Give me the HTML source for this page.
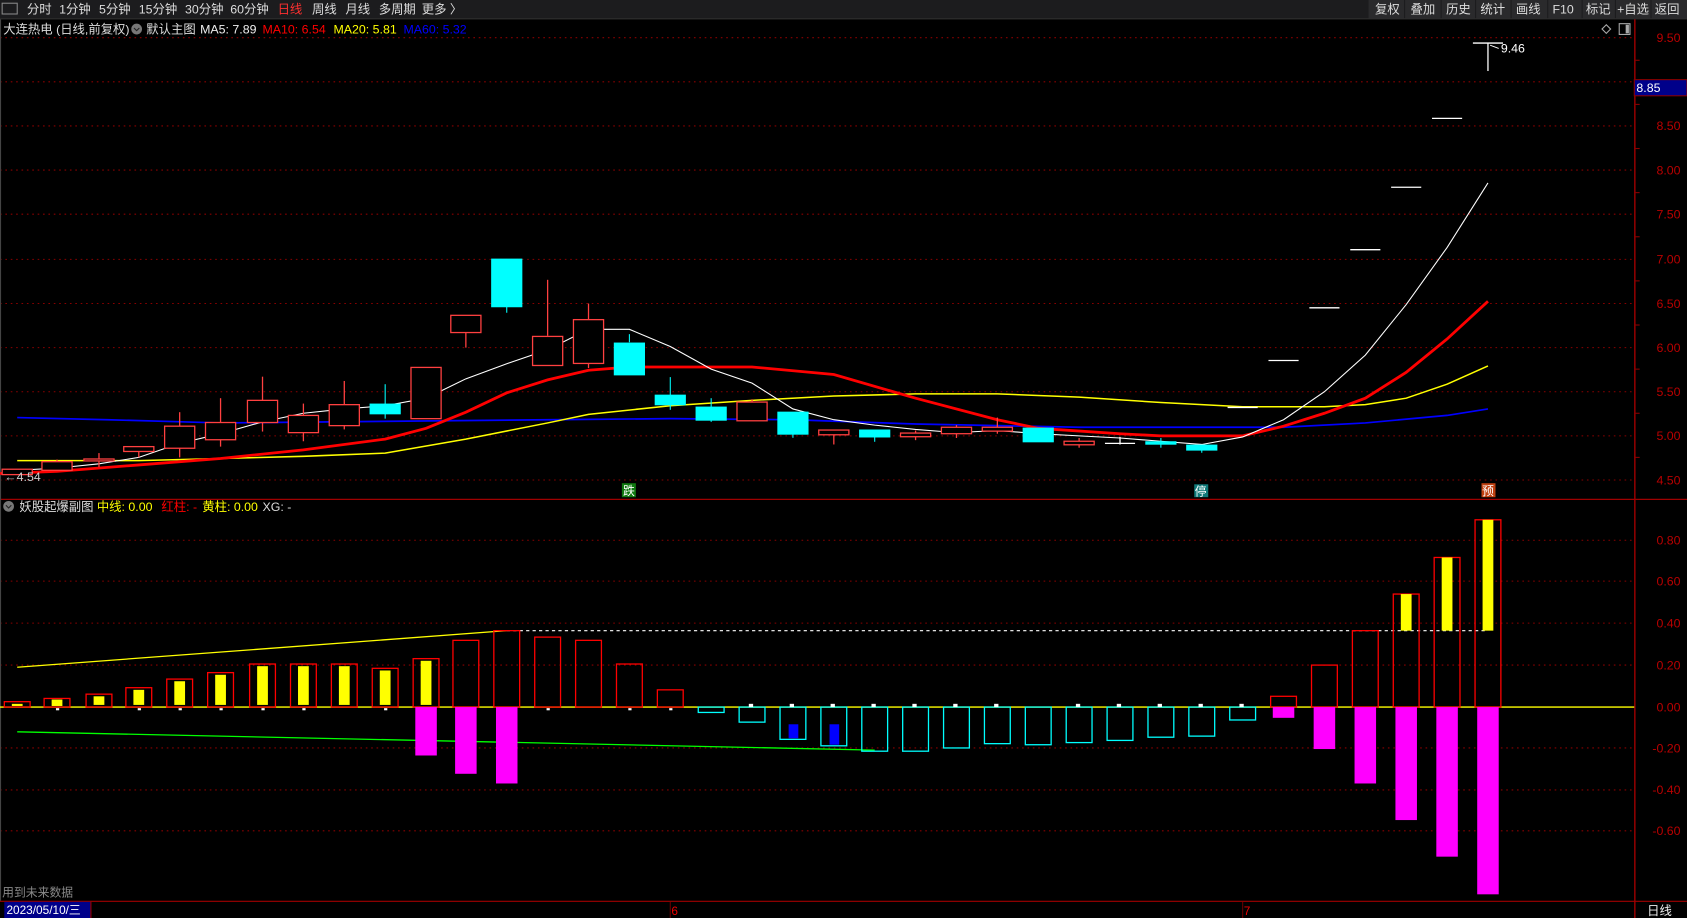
<!DOCTYPE html>
<html><head><meta charset="utf-8"><style>
html,body{margin:0;padding:0;background:#000;overflow:hidden}
svg{display:block}
text{font-family:"Liberation Sans","Noto Sans CJK SC",sans-serif}
</style></head><body>
<svg width="1687" height="918" viewBox="0 0 1568 853" preserveAspectRatio="none" xmlns="http://www.w3.org/2000/svg">
<rect width="1568" height="853" fill="#000"/>
<!-- toolbar -->
<rect x="0" y="0" width="1568" height="17" fill="#1c1c1e"/>
<line x1="0" y1="17.5" x2="1568" y2="17.5" stroke="#333"/>
<rect x="2" y="3" width="14" height="10" fill="none" stroke="#888" stroke-width="1"/>
<g font-size="11.5" fill="#ddd">
<text x="25" y="12.5">分时</text><text x="55" y="12.5">1分钟</text><text x="92" y="12.5">5分钟</text><text x="129" y="12.5">15分钟</text><text x="172" y="12.5">30分钟</text><text x="214" y="12.5">60分钟</text>
<text x="258" y="12.5" fill="#ff3030">日线</text><text x="290" y="12.5">周线</text><text x="321" y="12.5">月线</text><text x="352" y="12.5">多周期</text><text x="392" y="12.5">更多 〉</text>
</g>
<g fill="#2a2a2c"><rect x="1272" y="0" width="33" height="17"/><rect x="1306" y="0" width="33" height="17"/><rect x="1340" y="0" width="31" height="17"/><rect x="1372" y="0" width="32" height="17"/><rect x="1405" y="0" width="33" height="17"/><rect x="1439" y="0" width="31" height="17"/><rect x="1471" y="0" width="30" height="17"/><rect x="1502" y="0" width="32" height="17"/><rect x="1535" y="0" width="33" height="17"/></g>
<g font-size="11.5" fill="#ddd"><text x="1278" y="12.5">复权</text><text x="1311" y="12.5">叠加</text><text x="1344" y="12.5">历史</text><text x="1376" y="12.5">统计</text><text x="1409" y="12.5">画线</text><text x="1443" y="12.5">F10</text><text x="1474" y="12.5">标记</text><text x="1503" y="12.5">+自选</text><text x="1538" y="12.5">返回</text></g>
<!-- main title -->
<g font-size="11.5"><text x="3" y="31" fill="#ddd">大连热电 (日线,前复权)</text>
<circle cx="127" cy="27" r="5" fill="#777"/><path d="M124.5 26l2.5 2.5 2.5-2.5" stroke="#222" fill="none"/>
<text x="136" y="31" fill="#ddd">默认主图</text><text x="186" y="31" fill="#eee">MA5: 7.89</text><text x="244" y="31" fill="#f00">MA10: 6.54</text><text x="310" y="31" fill="#ff0">MA20: 5.81</text><text x="375" y="31" fill="#00f">MA60: 5.32</text></g>
<path d="M1489 27l4-4 4 4-4 4z" stroke="#aaa" fill="none"/><rect x="1505" y="22" width="10" height="10" fill="none" stroke="#aaa"/><rect x="1511" y="23" width="3" height="8" fill="#aaa"/>
<!-- grid main -->
<g stroke="#8a0000" stroke-dasharray="1.5,3.5" stroke-width="1">
<line x1="0" y1="35" x2="1519" y2="35"/><line x1="0" y1="76" x2="1519" y2="76"/><line x1="0" y1="117" x2="1519" y2="117"/><line x1="0" y1="158" x2="1519" y2="158"/><line x1="0" y1="199" x2="1519" y2="199"/><line x1="0" y1="241" x2="1519" y2="241"/><line x1="0" y1="282" x2="1519" y2="282"/><line x1="0" y1="323" x2="1519" y2="323"/><line x1="0" y1="364" x2="1519" y2="364"/><line x1="0" y1="405" x2="1519" y2="405"/><line x1="0" y1="446" x2="1519" y2="446"/>
<line x1="0" y1="502" x2="1519" y2="502"/><line x1="0" y1="540" x2="1519" y2="540"/><line x1="0" y1="579" x2="1519" y2="579"/><line x1="0" y1="618" x2="1519" y2="618"/><line x1="0" y1="695" x2="1519" y2="695"/><line x1="0" y1="734" x2="1519" y2="734"/><line x1="0" y1="772" x2="1519" y2="772"/>
</g>
<!-- axes -->
<line x1="1519.5" y1="18" x2="1519.5" y2="853" stroke="#8a0000" stroke-width="1.5"/>
<line x1="0" y1="464" x2="1568" y2="464" stroke="#a00000" stroke-width="1.2"/>
<line x1="0" y1="837.5" x2="1568" y2="837.5" stroke="#a00000" stroke-width="1"/>
<line x1="0.5" y1="18" x2="0.5" y2="837" stroke="#444"/>
<g font-size="11.5" fill="#b80000" text-anchor="end">
<text x="1562" y="39">9.50</text><text x="1562" y="121">8.50</text><text x="1562" y="162">8.00</text><text x="1562" y="203">7.50</text><text x="1562" y="245">7.00</text><text x="1562" y="286">6.50</text><text x="1562" y="327">6.00</text><text x="1562" y="368">5.50</text><text x="1562" y="409">5.00</text><text x="1562" y="450">4.50</text>
<text x="1562" y="506">0.80</text><text x="1562" y="544">0.60</text><text x="1562" y="583">0.40</text><text x="1562" y="622">0.20</text><text x="1562" y="661">0.00</text><text x="1562" y="699">-0.20</text><text x="1562" y="738">-0.40</text><text x="1562" y="776">-0.60</text>
</g>
<g stroke="#8a0000"><line x1="1519" y1="56" x2="1524" y2="56"/><line x1="1519" y1="97" x2="1524" y2="97"/><line x1="1519" y1="138" x2="1524" y2="138"/><line x1="1519" y1="179" x2="1524" y2="179"/><line x1="1519" y1="220" x2="1524" y2="220"/><line x1="1519" y1="261" x2="1524" y2="261"/><line x1="1519" y1="302" x2="1524" y2="302"/><line x1="1519" y1="343" x2="1524" y2="343"/><line x1="1519" y1="384" x2="1524" y2="384"/><line x1="1519" y1="425" x2="1524" y2="425"/></g>
<rect x="1519" y="74" width="49" height="15" fill="#00008a" stroke="#8a0000"/>
<text x="1521" y="85.5" font-size="11.5" fill="#fff">8.85</text>
<!-- MA lines -->
<polyline fill="none" stroke="#0000ff" stroke-width="1.6" points="16,388 100,390 205,393 509,390 623,389 737,390 851,394 1003,397 1193,397 1269,393 1345,386 1383,380"/>
<polyline fill="none" stroke="#ffff00" stroke-width="1.4" points="16,428 129,428 205,426 282,424 358,421 433,408 509,393 547,385 623,377 699,372 775,368 851,366 927,366 1003,369 1079,374 1155,378 1231,378 1269,376 1307,370 1345,357 1383,340"/>
<polyline fill="none" stroke="#ff0000" stroke-width="2.6" points="0,440 53,438 129,432 205,426 282,418 358,408 396,398 433,383 471,365 509,353 547,344 585,341 699,341 775,348 851,370 927,390 965,398 1041,403 1079,405 1155,405 1193,396 1231,384 1269,370 1307,346 1345,315 1383,280"/>
<polyline fill="none" stroke="#ffffff" stroke-width="1" points="16,437 53,435 92,431 129,425 167,412 205,403 244,392 282,384 320,380 358,377 396,370 433,352 471,338 509,325 547,306 585,306 623,322 661,343 699,356 737,380 775,390 813,395 851,399 889,402 927,400 965,403 1003,405 1041,407 1079,410 1117,413 1155,406 1193,390 1231,364 1269,330 1307,283 1345,230 1383,170"/>
<!-- candles -->
<g stroke="#ff4040" stroke-width="1.2" fill="#000">
<rect x="2" y="436" width="28" height="5"/>
<line x1="53" y1="427" x2="53" y2="429"/><rect x="39" y="429" width="28" height="8"/>
<line x1="92" y1="421" x2="92" y2="434"/><rect x="78" y="426.5" width="28" height="1.8"/>
<line x1="129" y1="419" x2="129" y2="425"/><rect x="115" y="415" width="28" height="4.5"/>
<line x1="167" y1="383" x2="167" y2="425"/><rect x="153" y="396" width="28" height="20.5"/>
<line x1="205" y1="370" x2="205" y2="415"/><rect x="191" y="392.6" width="28" height="16"/>
<line x1="244" y1="350" x2="244" y2="401"/><rect x="230" y="372" width="28" height="20.6"/>
<line x1="282" y1="375" x2="282" y2="410"/><rect x="268" y="386" width="28" height="16"/>
<line x1="320" y1="354" x2="320" y2="399"/><rect x="306" y="376" width="28" height="19.5"/>
<rect x="382" y="341.4" width="28" height="47.6"/>
<line x1="433" y1="309" x2="433" y2="323"/><rect x="419" y="293" width="28" height="16"/>
<line x1="509" y1="260" x2="509" y2="312"/><rect x="495" y="312.6" width="28" height="27"/>
<line x1="547" y1="282" x2="547" y2="342"/><rect x="533" y="297" width="28" height="40.7"/>
<line x1="699" y1="371" x2="699" y2="374"/><rect x="685" y="373.6" width="28" height="17.4"/>
<line x1="775" y1="404" x2="775" y2="413"/><rect x="761" y="399.6" width="28" height="4.4"/>
<line x1="851" y1="400" x2="851" y2="409"/><rect x="837" y="402.4" width="28" height="3.4"/>
<line x1="889" y1="395" x2="889" y2="407"/><rect x="875" y="397" width="28" height="6"/>
<line x1="927" y1="388" x2="927" y2="403"/><rect x="913" y="397" width="28" height="3.6"/>
<line x1="1003" y1="407" x2="1003" y2="416"/><rect x="989" y="410" width="28" height="3.3"/>
</g>
<g fill="#00ffff" stroke="#00ffff" stroke-width="1">
<line x1="358" y1="357" x2="358" y2="389"/><rect x="344" y="375.5" width="28" height="9"/>
<line x1="471" y1="285" x2="471" y2="290.6"/><rect x="457" y="240.8" width="28" height="44.2"/>
<line x1="585" y1="310.5" x2="585" y2="318"/><rect x="571" y="318.8" width="28" height="29.5"/>
<line x1="623" y1="350.4" x2="623" y2="380.8"/><rect x="609" y="367.2" width="28" height="8.9"/>
<line x1="661" y1="370" x2="661" y2="392"/><rect x="647" y="378.3" width="28" height="12.1"/>
<line x1="737" y1="383" x2="737" y2="406.8"/><rect x="723" y="383" width="28" height="20.4"/>
<line x1="813" y1="406" x2="813" y2="410.5"/><rect x="799" y="399.6" width="28" height="6.4"/>
<rect x="951" y="397.8" width="28" height="12.7"/>
<line x1="1079" y1="407" x2="1079" y2="416"/><rect x="1065" y="410.5" width="28" height="2.2"/>
<line x1="1117" y1="418" x2="1117" y2="420.7"/><rect x="1103" y="413.6" width="28" height="4.6"/>
</g>
<g stroke="#fff" stroke-width="1.2">
<line x1="1041" y1="406" x2="1041" y2="413"/><line x1="1027" y1="412" x2="1055" y2="412"/>
<line x1="1141" y1="378.6" x2="1169" y2="378.6"/>
<line x1="1179" y1="335" x2="1207" y2="335"/><line x1="1217" y1="286" x2="1245" y2="286"/><line x1="1255" y1="232" x2="1283" y2="232"/><line x1="1293" y1="174" x2="1321" y2="174"/><line x1="1331" y1="110" x2="1359" y2="110"/>
<line x1="1369" y1="40" x2="1397" y2="40"/><line x1="1383" y1="40" x2="1383" y2="66"/>
<line x1="1385" y1="42" x2="1393" y2="45" stroke-width="0.8"/>
</g>
<text x="1395" y="49" font-size="11.5" fill="#fff">9.46</text>
<text x="4" y="447" font-size="11.5" fill="#ccc">←4.54</text>
<!-- markers -->
<rect x="578" y="449" width="13" height="13" fill="#107a10"/><text x="579" y="460" font-size="11" fill="#fff">跌</text>
<rect x="1110" y="450" width="13" height="12" fill="#107a7a"/><text x="1110.5" y="460.5" font-size="11" fill="#fff">停</text>
<rect x="1377" y="449" width="13" height="13" fill="#c04010"/><text x="1377.5" y="460" font-size="11" fill="#fff">预</text>
<!-- sub title -->
<circle cx="8" cy="470.5" r="5" fill="#777"/><path d="M5.5 469.5l2.5 2.5 2.5-2.5" stroke="#222" fill="none"/>
<g font-size="11.5"><text x="18" y="475" fill="#ddd">妖股起爆副图</text><text x="90" y="475" fill="#ff0">中线: 0.00</text><text x="150" y="475" fill="#f00">红柱: -</text><text x="188" y="475" fill="#ff0">黄柱: 0.00</text><text x="244" y="475" fill="#ddd">XG: -</text></g>
<!-- sub lines -->
<polyline fill="none" stroke="#ffff00" stroke-width="1.2" points="16,620 471,586"/>
<polyline fill="none" stroke="#00ff00" stroke-width="1.2" points="16,680 813,697"/>
<line x1="471" y1="586" x2="1383" y2="586" stroke="#fff" stroke-dasharray="3,3" stroke-width="1"/>
<line x1="0" y1="657" x2="1519" y2="657" stroke="#ffff00" stroke-width="1.2"/>
<!-- red bars -->
<g fill="none" stroke="#ff0000" stroke-width="1.2">
<rect x="4" y="652" width="24" height="5"/><rect x="41" y="649" width="24" height="8"/><rect x="80" y="645" width="24" height="12"/><rect x="117" y="639" width="24" height="18"/><rect x="155" y="631" width="24" height="26"/><rect x="193" y="625" width="24" height="32"/><rect x="232" y="617" width="24" height="40"/><rect x="270" y="617" width="24" height="40"/><rect x="308" y="617" width="24" height="40"/><rect x="346" y="621" width="24" height="36"/><rect x="384" y="612" width="24" height="45"/><rect x="421" y="595" width="24" height="62"/><rect x="459" y="586" width="24" height="71"/><rect x="497" y="592" width="24" height="65"/><rect x="535" y="595" width="24" height="62"/><rect x="573" y="617" width="24" height="40"/><rect x="611" y="641" width="24" height="16"/>
<rect x="1181" y="647" width="24" height="10"/><rect x="1219" y="618" width="24" height="39"/><rect x="1257" y="586" width="24" height="71"/><rect x="1295" y="552" width="24" height="105"/><rect x="1333" y="518" width="24" height="139"/><rect x="1371" y="483" width="24" height="174"/>
</g>
<g fill="#ffff00">
<rect x="11" y="654" width="10" height="2"/><rect x="48" y="650" width="10" height="6"/><rect x="87" y="647" width="10" height="8"/><rect x="124" y="641" width="10" height="14"/><rect x="162" y="633" width="10" height="22"/><rect x="200" y="627" width="10" height="28"/><rect x="239" y="619" width="10" height="36"/><rect x="277" y="619" width="10" height="36"/><rect x="315" y="619" width="10" height="36"/><rect x="353" y="623" width="10" height="32"/><rect x="391" y="614" width="10" height="41"/>
<rect x="1302" y="552" width="10" height="34"/><rect x="1340" y="518" width="10" height="68"/><rect x="1378" y="483" width="10" height="103"/>
</g>
<g fill="#ff00ff">
<rect x="386" y="657" width="20" height="45"/><rect x="423" y="657" width="20" height="62"/><rect x="461" y="657" width="20" height="71"/><rect x="1183" y="657" width="20" height="10"/><rect x="1221" y="657" width="20" height="39"/><rect x="1259" y="657" width="20" height="71"/><rect x="1297" y="657" width="20" height="105"/><rect x="1335" y="657" width="20" height="139"/><rect x="1373" y="657" width="20" height="174"/>
</g>
<g fill="none" stroke="#00ffff" stroke-width="1.2">
<rect x="649" y="657" width="24" height="5"/><rect x="687" y="657" width="24" height="14"/><rect x="725" y="657" width="24" height="30"/><rect x="763" y="657" width="24" height="36"/><rect x="801" y="657" width="24" height="41"/><rect x="839" y="657" width="24" height="41"/><rect x="877" y="657" width="24" height="38"/><rect x="915" y="657" width="24" height="34"/><rect x="953" y="657" width="24" height="35"/><rect x="991" y="657" width="24" height="33"/><rect x="1029" y="657" width="24" height="31"/><rect x="1067" y="657" width="24" height="28"/><rect x="1105" y="657" width="24" height="27"/><rect x="1143" y="657" width="24" height="12"/>
</g>
<g fill="#0000ff"><rect x="733" y="673" width="9" height="13"/><rect x="771" y="673" width="9" height="19"/></g>
<g fill="#fff"><rect x="696" y="654" width="4" height="3"/><rect x="734" y="654" width="4" height="3"/><rect x="772" y="654" width="4" height="3"/><rect x="810" y="654" width="4" height="3"/><rect x="848" y="654" width="4" height="3"/><rect x="886" y="654" width="4" height="3"/><rect x="924" y="654" width="4" height="3"/><rect x="1000" y="654" width="4" height="3"/><rect x="1038" y="654" width="4" height="3"/><rect x="1076" y="654" width="4" height="3"/><rect x="1114" y="654" width="4" height="3"/><rect x="1152" y="654" width="4" height="3"/>
<rect x="52" y="658" width="3" height="2"/><rect x="128" y="658" width="3" height="2"/><rect x="166" y="658" width="3" height="2"/><rect x="204" y="658" width="3" height="2"/><rect x="243" y="658" width="3" height="2"/><rect x="281" y="658" width="3" height="2"/><rect x="357" y="658" width="3" height="2"/><rect x="508" y="658" width="3" height="2"/><rect x="584" y="658" width="3" height="2"/><rect x="622" y="658" width="3" height="2"/></g>
<text x="2" y="833" font-size="11" fill="#888">用到未来数据</text>
<!-- bottom bar -->
<rect x="4" y="838" width="80" height="15" fill="#00008a"/><line x1="84.5" y1="838" x2="84.5" y2="853" stroke="#a00000"/>
<text x="6" y="849.5" font-size="11" fill="#fff">2023/05/10/三</text>
<line x1="623" y1="838" x2="623" y2="853" stroke="#600"/><text x="624" y="850" font-size="11" fill="#e00">6</text>
<line x1="1155" y1="838" x2="1155" y2="853" stroke="#600"/><text x="1156" y="850" font-size="11" fill="#e00">7</text>
<text x="1531" y="850" font-size="11.5" fill="#eee">日线</text>
</svg>
</body></html>
